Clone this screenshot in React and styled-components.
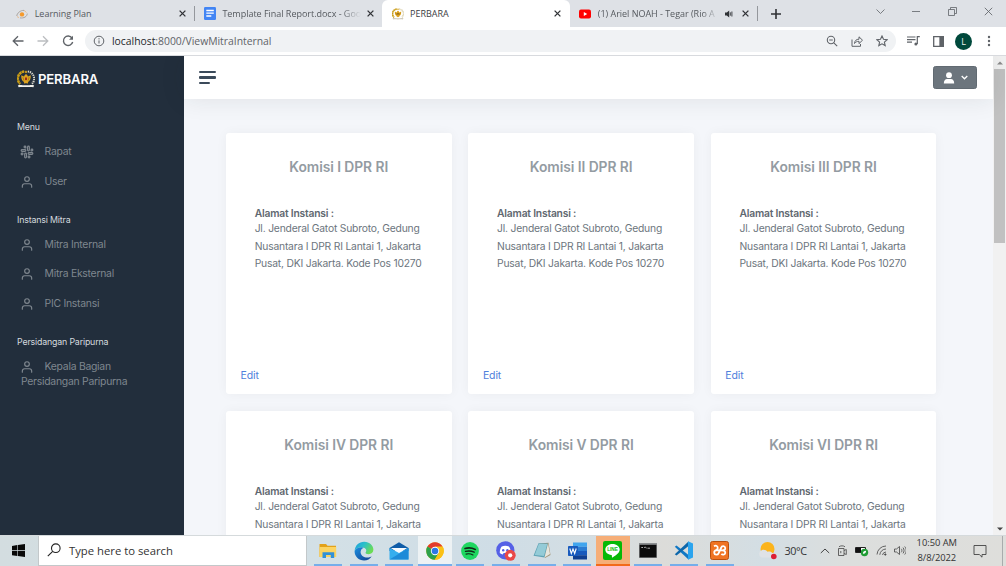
import React from "react";
import styled, { createGlobalStyle, css } from "styled-components";
import { FiUser, FiSlack } from "react-icons/fi";

const Global = createGlobalStyle`
  *, *::before, *::after { box-sizing: border-box; }
  html, body { margin: 0; padding: 0; overflow: hidden; }
  body { font-family: Inter, "Liberation Sans", sans-serif; background: #f4f6fa; }
  svg { display: block; flex: none; }
`;

const uiFont = css`font-family: "Open Sans", "Noto Sans", sans-serif;`;

const Screen = styled.div`
  width: 1006px;
  height: 566px;
  display: flex;
  flex-direction: column;
  overflow: hidden;
`;

/* ---------- browser chrome ---------- */

const TabStrip = styled.div`
  ${uiFont}
  height: 27px;
  flex: none;
  display: flex;
  padding-left: 6.7px;
  background: #dee1e6;
`;

const Tab = styled.div`
  width: 187.7px;
  flex: none;
  display: flex;
  align-items: center;
  padding: 0 8.3px 0 9.5px;
  position: relative;
  color: ${(p) => (p.$active ? "#3c4043" : "#55595e")};
  background: ${(p) => (p.$active ? "#fff" : "transparent")};
  border-radius: 6px 6px 0 0;
`;

const TabDivider = styled.i`
  position: absolute;
  right: -1px;
  top: 6px;
  width: 1px;
  height: 15px;
  background: #94979c;
`;

const TabTitle = styled.span`
  flex: 1;
  min-width: 0;
  margin: 0 6px 0 6.5px;
  font-size: 9px;
  letter-spacing: -0.02px;
  line-height: 14px;
  white-space: nowrap;
  overflow: hidden;
  ${(p) => p.$fade && css`mask-image: linear-gradient(90deg, #000 86%, transparent);`}
`;

const SoundBadge = styled.span`
  margin-right: 9px;
`;

const WindowButtons = styled.div`
  margin-left: auto;
  display: flex;
  align-items: center;
  gap: 27px;
  padding: 0 13.5px 4px 0;
`;

const NewTab = styled.div`
  display: flex;
  align-items: center;
  padding-left: 13.3px;
`;

const Toolbar = styled.div`
  ${uiFont}
  height: 29px;
  flex: none;
  display: flex;
  align-items: center;
  padding: 0 11px 0 11.5px;
  background: #fff;
  border-bottom: 1px solid #d8dade;
`;

const NavIcons = styled.div`
  display: flex;
  gap: 13.4px;
  width: 73.5px;
  flex: none;
`;

const AddressBar = styled.div`
  width: 811px;
  height: 22px;
  flex: none;
  display: flex;
  align-items: center;
  padding: 0 8px 0 8px;
  border-radius: 11px;
  background: #f0f2f4;
`;

const Url = styled.span`
  margin-left: 7px;
  font-size: 10.4px;
  letter-spacing: -0.02px;
  line-height: 16px;
  color: #5f6368;
  flex: 1;
  b { font-weight: 400; color: #26292c; }
`;

const AddressActions = styled.div`
  display: flex;
  gap: 13px;
`;

const ToolbarActions = styled.div`
  margin-left: auto;
  display: flex;
  align-items: center;
  gap: 13px;
`;

const Avatar = styled.div`
  width: 17px;
  height: 17px;
  margin: 0 -2px;
  border-radius: 50%;
  background: #00493c;
  color: #e8f0ee;
  font-size: 9px;
  line-height: 17px;
  text-align: center;
`;

/* ---------- page ---------- */

const Page = styled.div`
  height: 478.5px;
  flex: none;
  display: flex;
  overflow: hidden;
`;

const Sidebar = styled.nav`
  width: 184px;
  flex: none;
  background: #222e3c;
`;

const Brand = styled.div`
  height: 47.2px;
  display: flex;
  align-items: center;
  gap: 3px;
  padding: 0 0 1px 17px;
  color: #fbfbfc;
  font-size: 13.2px;
  font-weight: 600;
  letter-spacing: -0.2px;
`;

const NavHeader = styled.div`
  padding: 17.9px 0 4.2px 17px;
  line-height: 12px;
  font-size: 8.8px;
  letter-spacing: -0.16px;
  color: #d5dadf;
`;

const NavLink = styled.div`
  padding: 7px 40px 7px 21px;
  line-height: 15.3px;
  font-size: 10.4px;
  letter-spacing: -0.26px;
  color: #7f878f;
  svg { display: inline-block; vertical-align: -2px; margin: -3px 11px -2px -1.5px; }
`;

const Main = styled.div`
  width: 809px;
  flex: none;
  display: flex;
  flex-direction: column;
  background: #f4f6fa;
`;

const Navbar = styled.header`
  height: 43px;
  flex: none;
  display: flex;
  align-items: center;
  justify-content: space-between;
  padding: 0 16px 0 15px;
  background: #fff;
  box-shadow: 0 0 24px rgba(33, 37, 41, 0.1);
  z-index: 1;
`;

const Hamburger = styled.div`
  display: flex;
  flex-direction: column;
  gap: 3.3px;
  i { width: 17px; height: 2.2px; border-radius: 1px; background: #3b4a5a; }
  i:last-child { width: 11px; }
`;

const UserButton = styled.button`
  width: 44px;
  height: 23px;
  display: flex;
  align-items: center;
  justify-content: center;
  gap: 6px;
  padding: 0;
  border: 1px solid #616a72;
  border-radius: 2.5px;
  background: #6c757d;
`;

const CardGrid = styled.div`
  display: grid;
  grid-template-columns: repeat(3, 225.5px);
  grid-auto-rows: 261.4px;
  gap: 17px 16.9px;
  padding: 34px 0 0 42px;
`;

const Card = styled.article`
  display: flex;
  flex-direction: column;
  border-radius: 3px;
  background: #fff;
  box-shadow: 0 0 12px rgba(33, 37, 41, 0.045);
  padding: 23.5px 14.5px 10.6px;
`;

const CardTitle = styled.h5`
  margin: 0;
  text-align: center;
  font-size: 13.8px;
  letter-spacing: -0.06px;
  line-height: 20px;
  font-weight: 600;
  color: #939ba2;
`;

const CardBody = styled.div`
  padding: 29px 0 0 14.2px;
  color: #6c757d;
  strong { display: block; font-size: 10.3px; letter-spacing: -0.2px; line-height: 15px; font-weight: 600; color: #5f6870; }
  p { margin: -0.9px 0 0; font-size: 10.3px; letter-spacing: -0.19px; line-height: 17.9px; white-space: nowrap; }
`;

const EditLink = styled.a`
  margin-top: auto;
  font-size: 10.5px;
  letter-spacing: -0.1px;
  line-height: 16px;
  color: #4f80dc;
`;

const Scrollbar = styled.div`
  flex: 1;
  display: flex;
  flex-direction: column;
  align-items: center;
  background: #f1f1f1;
  padding: 5px 0 4px;
`;

const Thumb = styled.div`
  width: 11px;
  height: 174px;
  margin: 4px 0 auto;
  background: #c1c1c1;
`;

/* ---------- taskbar ---------- */

const Taskbar = styled.footer`
  ${uiFont}
  flex: 1;
  display: flex;
  border-top: 1px solid #d5dadc;
  background: linear-gradient(90deg, #d3dde0 0, #d3e0e6 32%, #cfdde6 50%, #d5dee2 60%, #dcdcd9 66%, #d3dee4 76%, #dcdedd 84%, #dededb 100%);
`;

const StartButton = styled.div`
  width: 38.4px;
  flex: none;
  display: flex;
  align-items: center;
  justify-content: center;
  padding-right: 1px;
`;

const SearchBox = styled.div`
  width: 269px;
  flex: none;
  display: flex;
  align-items: center;
  gap: 8px;
  padding-left: 7.6px;
  background: #fff;
  border: 1px solid #c3c8ca;
  border-top: 0;
  font-size: 11.3px;
  color: #333;
`;

const Apps = styled.div`
  display: flex;
  flex: none;
  padding-left: 2.8px;
`;

const appBackground = {
  active: "#edf2f4",
  alert: "#f6ae78",
};

const AppSlot = styled.div`
  width: 35.6px;
  flex: none;
  display: flex;
  justify-content: center;
  align-items: center;
  padding: 0 0.8px;
  position: relative;
  background: ${(p) => appBackground[p.$state] || "transparent"};
  background-clip: content-box;
  &::after {
    content: "";
    position: absolute;
    bottom: 0;
    left: ${(p) => (p.$state ? 0.8 : 3.8)}px;
    right: ${(p) => (p.$state ? 0.8 : 3.8)}px;
    height: 2px;
    background: ${(p) => (p.$state === "alert" ? "#f26a1b" : "#76aeea")};
  }
`;

const Tray = styled.div`
  margin-left: auto;
  display: flex;
  align-items: center;
  color: #333;
`;

const Temperature = styled.span`
  margin: 0 13px 0 6px;
  font-size: 10.8px;
  letter-spacing: -0.35px;
`;

const TrayIcons = styled.div`
  display: flex;
  align-items: center;
  gap: 7px;
`;

const Clock = styled.div`
  width: 58px;
  margin-left: 2px;
  text-align: center;
  font-size: 9.4px;
  letter-spacing: -0.04px;
  line-height: 14.4px;
`;

const NoticeIcon = styled.span`
  margin-left: 7px;
`;

const DesktopEdge = styled.div`
  width: 4px;
  height: 100%;
  margin-left: 15.2px;
  border-left: 1px solid #a9acad;
`;

/* ---------- drawings ---------- */

const Line = ({ w = 12, h = w, box, color = "#5f6368", sw = 1, children }) => (
  <svg width={w} height={h} viewBox={box || `0 0 ${w} ${h}`} fill="none" stroke={color} strokeWidth={sw}>
    {children}
  </svg>
);

const Close = ({ size = 7, color = "#303236", sw = 1.5 }) => (
  <Line w={size} box="0 0 8 8" color={color} sw={sw}><path d="M.7.7l6.6 6.6M7.3.7L.7 7.3" /></Line>
);

const Emblem = ({ size, dark }) => (
  <svg width={size} height={size} viewBox="0 0 18 18" fill="none">
    <path d="M7.200 1.500A7.200 7.200 0 0 0 3.200 14" stroke="#c99c16" strokeWidth="2.500" strokeDasharray="2.600 .4" />
    <path d="M10.800 1.500A7.200 7.200 0 0 1 14.800 14" stroke={dark ? "#d9d7cc" : "#d2c69b"} strokeWidth="2" strokeDasharray="1.300 .8" />
    <path d="M4.300 5.200l2.700 1.400.8-1.600L9 4l1.200 1 .8 1.600 2.700-1.400c.3 3.100-.6 5.500-2.400 6.500l-.8 2L9 13l-1.500.7-.8-2C4.900 10.700 4 8.300 4.300 5.200z" fill="#dda31f" />
    <path d="M8 7.600h2v1.900l-1 .9-1-.9z" fill={dark ? "#9c2a18" : "#7a5a1c"} />
    <path d="M5.900 7.200l1 3.300M12.100 7.200l-1 3.300" stroke="#84600f" strokeWidth=".6" />
    <path d="M9 .2l.5 1.100 1.100.1-.8.8.2 1.100-1-.6-1 .6.2-1.100-.8-.8 1.100-.1z" fill="#d9a520" />
    <path d="M.8 15.400c2.600-1 4.200-.1 8.200-.1s5.600-.9 8.200.1l-.9 1.900c-2.300-.7-4.300-.2-7.300-.2s-5-.5-7.300.2z" fill={dark ? "#f1f1ec" : "#cfcaba"} />
  </svg>
);

const LearnIcon = () => (
  <svg width="12" height="12" viewBox="0 0 12 12" fill="none">
    <path d="M.8 8C1 5 4.500 2.200 8 2.400M11.300 5.600C11 8.600 8 10.400 4 9.900" stroke="#aaa49f" strokeWidth="1" />
    <circle cx="6" cy="6.400" r="2.200" fill="#f59a2c" />
    <path d="M8 2.300l2.500 2.200M3 9.600l-2-1" stroke="#e9b27c" strokeWidth=".8" />
  </svg>
);

const DocsIcon = () => (
  <svg width="12" height="13" viewBox="0 0 12 13">
    <rect width="12" height="13" rx="1.200" fill="#4285f4" />
    <path d="M2.300 3.500h7.500M2.300 6.200h7.500M2.300 9h5" stroke="#fff" strokeWidth="1.300" />
  </svg>
);

const YoutubeIcon = () => (
  <svg width="12" height="12" viewBox="0 0 12 12">
    <rect y="1.600" width="12" height="8.800" rx="2" fill="#f00" />
    <path d="M4.800 4v4l3.400-2z" fill="#fff" />
  </svg>
);

const Speaker = () => (
  <svg width="8" height="8" viewBox="0 0 8 8">
    <path d="M0 2.600h1.800L4.200.6v6.800L1.800 5.400H0z" fill="#303236" />
    <path d="M5.300 2.300v3.400M6.900 1.500v5" stroke="#303236" strokeWidth=".9" />
  </svg>
);

const WindowsLogo = () => (
  <svg width="13" height="13" viewBox="0 0 13 13" fill="#090909">
    <path d="M0 1.900l5.300-.8v5H0zM5.900 1L13 0v6.100H5.900zM0 6.800h5.300v5.100L0 11.200zM5.900 6.800H13V13l-7.100-1z" />
  </svg>
);

const ExplorerIcon = () => (
  <svg width="18" height="16" viewBox="0 0 18 16">
    <path d="M.5 1h6.500L8.500 2.700H17V14H.5z" fill="#e3a21a" />
    <path d="M.5 4h16.700v10H.5z" fill="#fcd462" />
    <path d="M3.500 15V9.200h11.700V15h-3.400v-3H7v3z" fill="#3291d8" />
  </svg>
);

const EdgeIcon = () => (
  <svg width="20" height="20" viewBox="0 0 20 20">
    <defs>
      <linearGradient id="edgeTop" x1="0" y1="0" x2="1" y2=".5"><stop offset="0" stopColor="#1d9ae0" /><stop offset=".5" stopColor="#2cc0c9" /><stop offset="1" stopColor="#6bdc55" /></linearGradient>
      <linearGradient id="edgeLow" x1="0" y1="0" x2="1" y2="1"><stop offset="0" stopColor="#1b8fe0" /><stop offset="1" stopColor="#123f8f" /></linearGradient>
    </defs>
    <path d="M.6 10C1 4.300 5 .7 10.200.7c5.500 0 9.200 3.900 9.200 7.900 0 3-2.200 4.600-4.800 4.600-2.200 0-3.100-.8-3.100-1.400 0-.6.8-.9.8-2.300 0-1.800-2-3.300-4.700-3.300C4.300 6.200 1.600 7.800.6 10z" fill="url(#edgeTop)" />
    <path d="M.6 10c1-2.400 3.700-3.800 7-3.800.8 0 1.600.2 2.300.5-2.300.6-3.500 2.500-3.300 4.800.3 3.300 3.700 5.200 7 5 1.800-.1 3.200-.8 4.200-1.300-1.700 2.700-4.500 4.300-7.700 4.300C4.700 19.500.4 15.300.6 10z" fill="url(#edgeLow)" />
  </svg>
);

const MailIcon = () => (
  <svg width="20" height="18" viewBox="0 0 20 18">
    <path d="M.5 6L10 .3 19.500 6v3H.5z" fill="#0f5ca8" />
    <path d="M1.800 6h16.400L10 11.500z" fill="#f7fbff" />
    <path d="M.5 6L10 11l9.500-5v11.500H.5z" fill="#35aeee" />
    <path d="M.5 17.500L19.500 6v11.500z" fill="#1d8bd8" />
  </svg>
);

const ChromeIcon = () => (
  <svg width="18" height="18" viewBox="0 0 18 18">
    <circle cx="9" cy="9" r="8.800" fill="#fbc116" />
    <path d="M9 9L1.380 4.600A8.800 8.800 0 0 1 16.620 4.600L9 4.800z" fill="#e33b2e" />
    <path d="M1.380 4.600A8.800 8.800 0 0 0 8.700 17.800L12.800 11.200 9 9z" fill="#2da14c" />
    <path d="M9 4.800h7.700a8.800 8.800 0 0 1-8 13L12.700 11z" fill="#fbc116" />
    <circle cx="9" cy="9" r="4.200" fill="#fff" />
    <circle cx="9" cy="9" r="3.300" fill="#2e77e5" />
  </svg>
);

const SpotifyIcon = () => (
  <svg width="18" height="18" viewBox="0 0 18 18" fill="none" stroke="#102a18" strokeLinecap="round">
    <circle cx="9" cy="9" r="8.900" fill="#1ed760" stroke="none" />
    <path d="M4 6.500c3.500-1 7-.7 10.300.9" strokeWidth="1.700" />
    <path d="M4.500 9.400c3-.8 6-.5 8.700.8" strokeWidth="1.400" />
    <path d="M5 12.100c2.500-.6 4.800-.3 7 .8" strokeWidth="1.100" />
  </svg>
);

const DiscordIcon = () => (
  <svg width="20" height="20" viewBox="0 0 20 20">
    <circle cx="9.300" cy="9.300" r="9.100" fill="#5560e6" />
    <path d="M5.700 5.600c2.300-1 4.900-1 7.200 0 1.300 1.900 2 4 1.900 6.400-1 .8-2 1.200-3 1.400l-.8-1.300H7.600l-.8 1.300c-1-.2-2-.6-3-1.400-.1-2.400.6-4.500 1.900-6.400z" fill="#fff" />
    <circle cx="7.200" cy="9.300" r="1.200" fill="#5560e6" />
    <circle cx="11.400" cy="9.300" r="1.200" fill="#5560e6" />
    <circle cx="14.200" cy="14.300" r="5.500" fill="#ea4848" />
    <circle cx="14.200" cy="14.300" r="2.100" fill="#fff" />
  </svg>
);

const NotepadIcon = () => (
  <svg width="18" height="17" viewBox="0 0 18 17">
    <path d="M6 1.500L15.500.8 17.500 13 12 16z" fill="#a59579" />
    <path d="M5.500 1.200l9.500.2-3.500 14L.5 13.800z" fill="#5fa3b5" />
    <path d="M5.900 1.700l8.300.3-3.200 12-9.300-1z" fill="#94cbd7" />
    <path d="M15 1.400l2 10.600-5.500 3.400z" fill="#e6e6de" />
  </svg>
);

const WordIcon = () => (
  <svg width="19" height="18" viewBox="0 0 19 18">
    <path d="M5 .5h14v4.300H5z" fill="#41a5ee" />
    <path d="M5 4.800h14V9H5z" fill="#2b7cd3" />
    <path d="M5 9h14v4.200H5z" fill="#185abd" />
    <path d="M5 13.200h14v4.300H5z" fill="#103f91" />
    <rect y="4" width="10" height="10" rx=".8" fill="#185abd" />
    <path d="M1.800 6.500l1.500 5L5 7l1.700 4.500 1.500-5" stroke="#fff" strokeWidth="1.100" fill="none" />
  </svg>
);

const LineText = styled.text`
  font: 700 4.600px "Liberation Sans", sans-serif;
`;

const LineIcon = () => (
  <svg width="19" height="19" viewBox="0 0 19 19">
    <rect width="19" height="19" rx="2" fill="#06b906" />
    <path d="M9.500 3C5.400 3 2.300 5.500 2.300 8.600c0 2.900 2.600 5 6 5.500.8.200.7.900.6 2 0 .4.300.5.700.3 2.300-1.300 7.100-4 7.100-7.800C16.700 5.500 13.600 3 9.500 3z" fill="#fff" />
    <LineText x="4.200" y="10.300" fill="#06b906" textLength="10.600" lengthAdjust="spacingAndGlyphs">LINE</LineText>
  </svg>
);

const TerminalIcon = () => (
  <svg width="18" height="15" viewBox="0 0 18 15">
    <rect width="18" height="15" fill="#8c8f91" />
    <rect x=".6" y="1.800" width="16.800" height="12.600" fill="#0c0c0c" />
    <path d="M2.300 4.500h1.700M5 4.500h.8M6.300 3.700l1 1.600M8.500 5.200h2.500" stroke="#d8d8d8" strokeWidth=".8" />
  </svg>
);

const CodeIcon = () => (
  <svg width="20" height="19" viewBox="0 0 20 19">
    <path d="M.8 5.800l1.700-1.400L14.500 14v4.500z" fill="#1178c4" />
    <path d="M.8 13.200l1.700 1.400L14.500 5V.5z" fill="#0d67ab" />
    <path d="M14 .3L19 2.600V16.400L14 18.700z" fill="#2ba4ee" />
  </svg>
);

const XamppIcon = () => (
  <svg width="19" height="19" viewBox="0 0 19 19" fill="none">
    <rect x=".5" y=".5" width="18" height="18" rx="2" fill="#f07423" stroke="#b9500f" />
    <g stroke="#fff" strokeWidth="1.800" strokeLinejoin="round">
      <path d="M4 5.300C6 4 8 5 7.700 7.200 7.500 8.600 6.500 9.400 5.300 9.400h7.500c1.800 0 2.600-1.200 2.400-2.600-.3-2-3.400-2.300-3.900-.3L8.500 12.400c-.8 2-3.900 1.600-4.200-.4-.2-1.400.3-2.300 1.500-2.600" />
      <path d="M12.800 9.400c1.800.2 2.700 1.300 2.400 2.700-.3 1.800-2.800 2.200-3.700.6" />
    </g>
  </svg>
);

const WeatherIcon = () => (
  <svg width="20" height="19" viewBox="0 0 20 19">
    <circle cx="9.500" cy="8" r="7" fill="#fbb41c" />
    <path d="M4 16.500a3.800 3.800 0 0 1-.3-7.300C5.500 8.200 8.500 9 9.500 10.700c2.400-.6 4.300.3 4.800 1.200 2.700 0 3.400 4.600 0 4.600z" fill="#dfe2e6" />
    <circle cx="15.800" cy="15.500" r="2.800" fill="#dd1f35" />
  </svg>
);

/* ---------- content ---------- */

const menu = [
  { header: "Menu", links: [{ label: "Rapat", icon: FiSlack }, { label: "User" }] },
  { header: "Instansi Mitra", links: [{ label: "Mitra Internal" }, { label: "Mitra Eksternal" }, { label: "PIC Instansi" }] },
  { header: "Persidangan Paripurna", links: [{ label: "Kepala Bagian Persidangan Paripurna" }] },
];

const commissions = ["I", "II", "III", "IV", "V", "VI"];

const apps = [
  { icon: ExplorerIcon }, { icon: EdgeIcon }, { icon: MailIcon },
  { icon: ChromeIcon, state: "active" }, { icon: SpotifyIcon }, { icon: DiscordIcon },
  { icon: NotepadIcon }, { icon: WordIcon }, { icon: LineIcon, state: "alert" },
  { icon: TerminalIcon }, { icon: CodeIcon }, { icon: XamppIcon },
];

const BrowserTabs = () => (
  <TabStrip>
    <Tab><LearnIcon /><TabTitle>Learning Plan</TabTitle><Close /><TabDivider /></Tab>
    <Tab><DocsIcon /><TabTitle $fade>Template Final Report.docx - Goo</TabTitle><Close /></Tab>
    <Tab $active><Emblem size={12} /><TabTitle>PERBARA</TabTitle><Close /></Tab>
    <Tab><YoutubeIcon /><TabTitle $fade>(1) Ariel NOAH - Tegar (Rio A</TabTitle><SoundBadge><Speaker /></SoundBadge><Close /><TabDivider /></Tab>
    <NewTab><Line w={10} color="#303236" sw={1.6}><path d="M5 0v10M0 5h10" /></Line></NewTab>
    <WindowButtons>
      <Line w={9} sw={0.8}><path d="M.5 2.500l4 4 4-4" /></Line>
      <Line w={9} sw={0.8}><path d="M0 4.500h8" /></Line>
      <Line w={9} sw={0.8}><path d="M.5 2.500h6v6h-6zM2.500 2.500v-2h6v6h-2" /></Line>
      <Close size={9} color="#5f6368" sw={0.75} />
    </WindowButtons>
  </TabStrip>
);

const BrowserToolbar = () => (
  <Toolbar>
    <NavIcons>
      <Line sw={1.3}><path d="M11.500 6H1.500M6 1.200L1.200 6 6 10.800" /></Line>
      <Line sw={1.3} color="#bcbec1"><path d="M.5 6h10M6 1.200L10.800 6 6 10.800" /></Line>
      <Line sw={1.4}><path d="M10 3A4.700 4.700 0 1 0 10.700 7" /><path d="M11 .8v4H7z" fill="#5f6368" stroke="none" /></Line>
    </NavIcons>
    <AddressBar>
      <Line w={12}><circle cx="6" cy="6" r="4.800" /><path d="M6 5.400v3.100M6 3.200v1.200" /></Line>
      <Url><b>localhost</b>:8000/ViewMitraInternal</Url>
      <AddressActions>
        <Line w={12} sw={1.1}><circle cx="5" cy="5" r="3.700" /><path d="M7.800 7.800l3.400 3.400M3.200 5h3.600" /></Line>
        <Line w={12}><path d="M1 4.500v6.800h8.500V9M3.500 8.500C3.800 5.500 5.300 4.300 8 4.200V1.800l3.500 3.400L8 8.600V6.300c-2 0-3.300.6-4.500 2.200z" /></Line>
        <Line w={12} sw={1.1}><path d="M6 1l1.500 3.300 3.600.4-2.700 2.400.8 3.500L6 8.800l-3.200 1.800.8-3.500L.9 4.700l3.600-.4z" /></Line>
      </AddressActions>
    </AddressBar>
    <ToolbarActions>
      <Line w={13} h={12} sw={1.2}><path d="M0 2h8.500M0 4.600h8.500M0 7.200h5M10.300 9V1.600h2.500" /><circle cx="8.900" cy="9" r="1.500" fill="#5f6368" stroke="none" /></Line>
      <Line w={11} sw={1.3}><path d="M.7.7h9.600v9.600H.7z" /><path d="M7 .7h3.300v9.600H7z" fill="#5f6368" /></Line>
      <Avatar>L</Avatar>
      <Line w={12} sw={0}><g fill="#5f6368"><circle cx="6" cy="2" r="1.200" /><circle cx="6" cy="6" r="1.200" /><circle cx="6" cy="10" r="1.200" /></g></Line>
    </ToolbarActions>
  </Toolbar>
);

const SidebarMenu = () => (
  <Sidebar>
    <Brand><Emblem size={18} dark />PERBARA</Brand>
    {menu.map(({ header, links }) => (
      <React.Fragment key={header}>
        <NavHeader>{header}</NavHeader>
        {links.map(({ label, icon: Icon = FiUser }) => (
          <NavLink key={label}><Icon size={14} strokeWidth={2} />{label}</NavLink>
        ))}
      </React.Fragment>
    ))}
  </Sidebar>
);

const CommissionCard = ({ number }) => (
  <Card>
    <CardTitle>Komisi {number} DPR RI</CardTitle>
    <CardBody>
      <strong>Alamat Instansi :</strong>
      <p>Jl. Jenderal Gatot Subroto, Gedung<br />Nusantara I DPR RI Lantai 1, Jakarta<br />Pusat, DKI Jakarta. Kode Pos 10270</p>
    </CardBody>
    <EditLink>Edit</EditLink>
  </Card>
);

const SystemTray = () => (
  <Tray>
    <WeatherIcon />
    <Temperature>30°C</Temperature>
    <TrayIcons>
      <Line w={10} color="#333" sw={0.9}><path d="M.8 7L5 3l4.200 4" /></Line>
      <Line w={11} h={12} color="#444" sw={0.8}><path d="M1.500 3.500h5.500v7H1.500zM7 5.500l2.300-1v5L7 8.500M2 1.800c1.500-1.300 4.500-1.300 6 0M3.800 6v2.200" /></Line>
      <svg width="14" height="12" viewBox="0 0 14 12"><path d="M.5 2.500h10v5H.5z" fill="#fff" stroke="#222" /><path d="M1 3h5v4H1z" fill="#111" /><circle cx="9.500" cy="7.500" r="3.700" fill="#1f9c34" /><path d="M7.900 8.800c0-2 1-3 3.200-3-.1 2.200-1.200 3.300-3.200 3z" fill="#fff" /></svg>
      <Line w={11} h={11} color="#555" sw={0.9}><path d="M1 9.500A9 9 0 0 1 10 1M3.800 9.800A6.300 6.300 0 0 1 10 4M6.500 10A3.700 3.700 0 0 1 10 7" /><circle cx="9.300" cy="9.500" r=".7" fill="#333" /></Line>
      <Line w={12} h={11} color="#444" sw={0.8}><path d="M.5 4h2L5.500 1.500v8L2.500 7h-2zM7.300 3.800c.8 1 .8 2.500 0 3.500M9 2.600c1.400 1.700 1.400 4.100 0 5.800M10.700 1.500c2 2.400 2 5.600 0 8" /></Line>
    </TrayIcons>
    <Clock>10:50 AM<br />8/8/2022</Clock>
    <NoticeIcon><Line w={14} color="#444" sw={0.9}><path d="M1 1.500h12v9H9v2.700L6.300 10.500H1z" /></Line></NoticeIcon>
    <DesktopEdge />
  </Tray>
);

export default function App() {
  return (
    <Screen>
      <Global />
      <BrowserTabs />
      <BrowserToolbar />
      <Page>
        <SidebarMenu />
        <Main>
          <Navbar>
            <Hamburger><i /><i /><i /></Hamburger>
            <UserButton>
              <svg width="12" height="12" viewBox="0 0 12 12" fill="#fff"><circle cx="6" cy="3.200" r="2.900" /><path d="M.8 11.500c0-3 1.400-4.500 3.200-4.500h4c1.800 0 3.200 1.500 3.200 4.500z" /></svg>
              <Line w={7} color="#fff" sw={1.3}><path d="M.7 2l2.800 2.800L6.300 2" /></Line>
            </UserButton>
          </Navbar>
          <CardGrid>
            {commissions.map((n) => <CommissionCard key={n} number={n} />)}
          </CardGrid>
        </Main>
        <Scrollbar>
          <svg width="6" height="4" viewBox="0 0 6 4"><path d="M0 3.500h6L3 .5z" fill="#8a8a8a" /></svg>
          <Thumb />
          <svg width="6" height="4" viewBox="0 0 6 4"><path d="M0 .5h6L3 3.500z" fill="#444" /></svg>
        </Scrollbar>
      </Page>
      <Taskbar>
        <StartButton><WindowsLogo /></StartButton>
        <SearchBox>
          <Line w={14} color="#222" sw={1.1}><circle cx="8.800" cy="5.200" r="4.300" /><path d="M5.700 8.300L.8 13.200" /></Line>
          Type here to search
        </SearchBox>
        <Apps>
          {apps.map(({ icon: Icon, state }, i) => <AppSlot key={i} $state={state}><Icon /></AppSlot>)}
        </Apps>
        <SystemTray />
      </Taskbar>
    </Screen>
  );
}
